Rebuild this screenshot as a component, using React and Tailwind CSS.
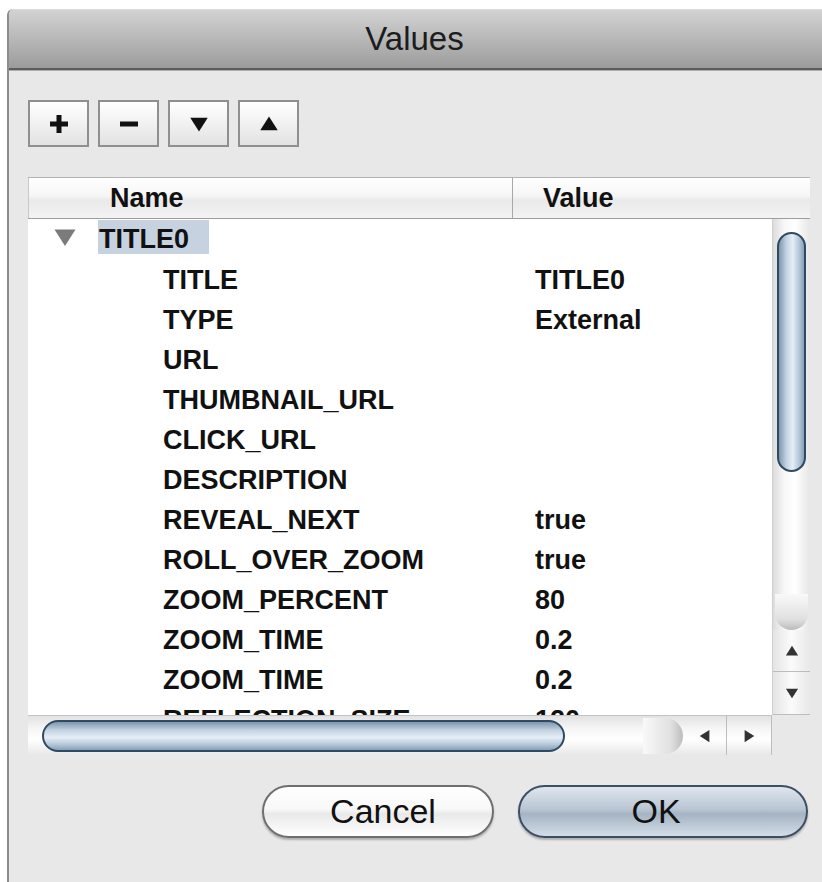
import React from "react";

// property rows shown under the expanded TITLE0 node
const rows = [
  ["TITLE", "TITLE0"],
  ["TYPE", "External"],
  ["URL", ""],
  ["THUMBNAIL_URL", ""],
  ["CLICK_URL", ""],
  ["DESCRIPTION", ""],
  ["REVEAL_NEXT", "true"],
  ["ROLL_OVER_ZOOM", "true"],
  ["ZOOM_PERCENT", "80"],
  ["ZOOM_TIME", "0.2"],
  ["ZOOM_TIME", "0.2"],
  ["REFLECTION_SIZE", "120"],
];

const ToolButton = ({ children }) => (
  <button className="w-[61px] h-[47px] flex items-center justify-center border-2 border-[#8f8f8f] bg-[linear-gradient(180deg,#ffffff,#f1f1f1_50%,#e2e2e2)]">
    {children}
  </button>
);

const Tri = ({ dir = "down", className = "", size = 16, color = "#111" }) => (
  <svg width={size} height={size} viewBox="0 0 16 16" className={className}>
    {dir === "down" && <polygon points="1,3 15,3 8,14" fill={color} />}
    {dir === "up" && <polygon points="1,13 15,13 8,2" fill={color} />}
    {dir === "left" && <polygon points="13,1 13,15 2,8" fill={color} />}
    {dir === "right" && <polygon points="3,1 3,15 14,8" fill={color} />}
  </svg>
);

const Row = ({ name, value }) => (
  <div className="h-[40px] flex items-center shrink-0">
    <div className="w-[485px] pl-[135px] whitespace-nowrap">{name}</div>
    <div className="pl-[22px] whitespace-nowrap">{value}</div>
  </div>
);

export default function App() {
  return (
    <div className="w-[822px] h-[882px] overflow-hidden bg-white pt-[9px] pl-[7px] font-['Liberation_Sans',Arial,sans-serif] text-[#111]">
      <div className="h-full flex flex-col bg-[#e8e8e8] border-l-2 border-[#8c8c8c] rounded-tl-[6px] overflow-hidden">
        {/* title bar */}
        <div className="h-[61px] shrink-0 flex items-center justify-center border-t border-[#dcdcdc] border-b-2 border-b-[#5c5c5c] bg-[linear-gradient(180deg,#d2d2d2,#bdbdbd_40%,#9c9c9c)] text-[33px] text-[#1c1c1c] pr-[2px]">
          Values
        </div>
        <div className="h-px shrink-0 bg-[#adadad]" />

        <div className="flex-1 flex flex-col pl-[19px] pt-[29px]">
          {/* toolbar */}
          <div className="flex gap-[9px]">
            <ToolButton>
              <svg width="22" height="22" viewBox="0 0 22 22">
                <rect x="8.5" y="2" width="5" height="18" fill="#111" />
                <rect x="2" y="8.5" width="18" height="5" fill="#111" />
              </svg>
            </ToolButton>
            <ToolButton>
              <svg width="22" height="22" viewBox="0 0 22 22">
                <rect x="2" y="8.5" width="18" height="5" fill="#111" />
              </svg>
            </ToolButton>
            <ToolButton>
              <Tri dir="down" size={20} />
            </ToolButton>
            <ToolButton>
              <Tri dir="up" size={20} />
            </ToolButton>
          </div>

          {/* tree table */}
          <div className="mt-[30px] w-[782px] text-[27px] font-bold">
            <div className="h-[42px] flex border-t border-[#b4b4b4] border-b border-b-[#9d9d9d] bg-[linear-gradient(180deg,#ffffff,#f6f6f6_45%,#e9e9e9_55%,#f3f3f3)] text-[27px]">
              <div className="w-[485px] pl-[81px] flex items-center border-l border-[#c8c8c8] border-r border-r-[#a8a8a8]">Name</div>
              <div className="pl-[30px] flex items-center">Value</div>
            </div>

            <div className="flex h-[496px]">
              {/* rows */}
              <div className="w-[744px] bg-white overflow-hidden flex flex-col pt-px">
                <div className="h-[40px] flex shrink-0">
                  <div className="w-[70px] flex items-center pl-[25px] pb-[6px]">
                    <Tri dir="down" size={24} color="#7b7b7b" />
                  </div>
                  <div className="h-[34px] px-[1px] w-[111px] flex items-center pt-[4px] bg-[#c6d2df]">TITLE0</div>
                </div>
                {rows.map(([n, v], i) => (
                  <Row key={i} name={n} value={v} />
                ))}
              </div>

              {/* vertical scroller */}
              <div className="w-[38px] flex flex-col bg-[linear-gradient(90deg,#dcdcdc,#f7f7f7_30%,#ffffff_60%,#e6e6e6)] border-l border-[#cfcfcf]">
                <div className="h-[13px] shrink-0" />
                <div className="h-[240px] mx-[4px] shrink-0 rounded-full border-2 border-[#2f4a63] bg-[linear-gradient(90deg,#7e97ae,#c3d3e2_30%,#e6eef6_55%,#b5c8da_80%,#86a0b7)]" />
                <div className="flex-1 flex flex-col justify-end">
                  <div className="h-[36px] mx-[2px] rounded-b-full bg-[linear-gradient(180deg,#f9f9f9,#e0e0e0_70%,#bcbcbc)]" />
                </div>
                <div className="h-[42px] flex items-center justify-center border-b border-[#bdbdbd] bg-[linear-gradient(90deg,#e4e4e4,#fbfbfb_50%,#e8e8e8)]">
                  <Tri dir="up" size={14} color="#333" />
                </div>
                <div className="h-[43px] flex items-center justify-center bg-[linear-gradient(90deg,#e4e4e4,#fbfbfb_50%,#e8e8e8)] border-b border-[#bdbdbd]">
                  <Tri dir="down" size={14} color="#333" />
                </div>
              </div>
            </div>

            {/* horizontal scroller */}
            <div className="flex h-[40px]">
              <div className="w-[744px] flex border-t border-[#c4c4c4] bg-[linear-gradient(180deg,#e2e2e2,#f7f7f7_35%,#ffffff_60%,#e8e8e8)]">
                <div className="flex-1 flex items-center pl-[14px]">
                  <div className="w-[523px] h-[32px] rounded-full border-2 border-[#2f4a63] bg-[linear-gradient(180deg,#7e97ae,#c3d3e2_30%,#e6eef6_55%,#b5c8da_80%,#86a0b7)]" />
                  <div className="ml-auto h-[36px] w-[40px] rounded-r-full bg-[linear-gradient(90deg,#f9f9f9,#e0e0e0_70%,#bcbcbc)]" />
                </div>
                <div className="w-[44px] flex items-center justify-center border-r border-[#bdbdbd]">
                  <Tri dir="left" size={14} color="#333" />
                </div>
                <div className="w-[45px] flex items-center justify-center border-r border-[#bdbdbd]">
                  <Tri dir="right" size={14} color="#333" />
                </div>
              </div>
            </div>
          </div>

          {/* dialog buttons */}
          <div className="mt-[30px] flex justify-end gap-[24px] pr-[14px] text-[34px]">
            <button className="w-[232px] h-[53px] rounded-full border-2 border-[#6f6f6f] bg-[linear-gradient(180deg,#ffffff,#f8f8f8_45%,#e9e9e9_55%,#ffffff)] shadow-[0_2px_2px_rgba(0,0,0,0.25)] flex items-center justify-center pl-[10px]">
              Cancel
            </button>
            <button className="w-[290px] h-[53px] rounded-full border-2 border-[#3c4f63] bg-[linear-gradient(180deg,#dfe6ee,#b9c6d3_45%,#a5b4c3_55%,#d2dde8)] shadow-[0_2px_2px_rgba(0,0,0,0.25)] flex items-center justify-center pr-[14px]">
              OK
            </button>
          </div>
        </div>
      </div>
    </div>
  );
}
